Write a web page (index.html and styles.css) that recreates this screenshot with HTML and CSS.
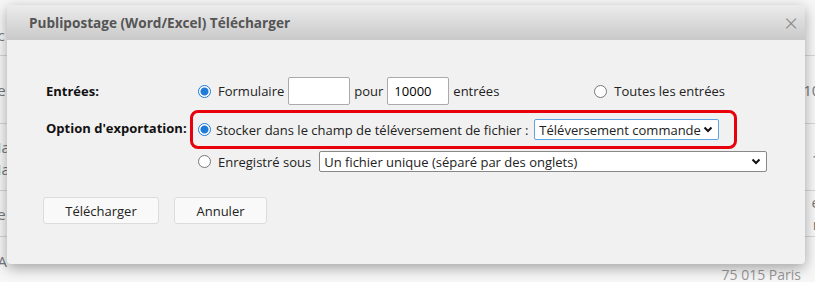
FILE: index.html
```html
<!DOCTYPE html>
<html lang="fr">
<head>
    <meta charset="UTF-8">
    <title>Publipostage</title>
    <link rel="stylesheet" href="styles.css">
</head>
<body>

    <div class="page">
        <div class="row r1"><span class="cell left">Ac</span><span class="cell right"></span></div>
        <div class="row r2"><span class="cell left">de</span><span class="cell right">100</span></div>
        <div class="row r3"><span class="cell left">Ma<br>Ma</span><span class="cell right">10</span></div>
        <div class="row r4"><span class="cell left">de</span><span class="cell right">en<br>ns</span></div>
        <div class="row r5"><span class="cell left">AA</span><span class="cell right">n<br><span class="city">75 015 Paris</span></span></div>
    </div>

    <div class="dialog">
        <div class="dialog-head">
            <span class="title">Publipostage (Word/Excel) Télécharger</span>
            <span class="close">&#215;</span>
        </div>
        <div class="dialog-body">
            <div class="line">
                <label class="key">Entrées:</label>
                <div class="val first">
                    <span class="radio on"></span>
                    <span>Formulaire</span>
                    <input type="text" class="num" value="">
                    <span>pour</span>
                    <input type="text" class="num" value="10000">
                    <span>entrées</span>
                    <span class="radio all"></span>
                    <span>Toutes les entrées</span>
                </div>
            </div>

            <div class="line">
                <label class="key">Option d'exportation:</label>
                <div class="val marked">
                    <span class="radio on"></span>
                    <span>Stocker dans le champ de téléversement de fichier :</span>
                    <div class="select focus">
                        <span>Téléversement commande</span>
                        <svg width="10" height="7" viewBox="0 0 10 7"><path d="M1.5 1.5 L5 5 L8.5 1.5" fill="none" stroke="#111" stroke-width="2"/></svg>
                    </div>
                </div>
            </div>

            <div class="line">
                <label class="key"></label>
                <div class="val first">
                    <span class="radio"></span>
                    <span>Enregistré sous</span>
                    <div class="select wide">
                        <span>Un fichier unique (séparé par des onglets)</span>
                        <svg width="10" height="7" viewBox="0 0 10 7"><path d="M1.5 1.5 L5 5 L8.5 1.5" fill="none" stroke="#111" stroke-width="2"/></svg>
                    </div>
                </div>
            </div>

            <div class="buttons">
                <button class="btn dl">Télécharger</button>
                <button class="btn cancel">Annuler</button>
            </div>
        </div>
    </div>

</body>
</html>
```

FILE: styles.css
```css
body {
    margin: 0;
    font-family: "Open Sans", sans-serif;
    font-size: 13px;
    color: #222;
    background-color: #f7f7f7;
    width: 815px;
    height: 282px;
    overflow: hidden;
    position: relative;
}
.row {
    display: flex;
    justify-content: space-between;
    border-bottom: 1px solid #d6d6d6;
    color: #777;
    font-size: 15px;
    line-height: 22px;
}
.r1 { height: 55px; }
.r2 { height: 67px; }
.r3 { height: 66px; }
.r4 { height: 45px; }
.r5 { height: 46px; border-bottom: none; }
.cell.left {
    margin-left: -12px;
}
.cell.right {
    text-align: right;
    margin-right: -14px;
}
.r1 .left { padding-top: 24px; }
.r2 .left, .r2 .right { padding-top: 23px; }
.r3 .left { padding-top: 12px; }
.r3 .right { padding-top: 24px; }
.r4 .left { padding-top: 12px; }
.r4 .right { padding-top: 0; }
.r5 .left { padding-top: 13px; }
.r5 .right { padding-top: 4px; }
.city {
    display: inline-block;
    margin-right: 28px;
    font-size: 14px;
    color: #999;
}
.dialog {
    position: absolute;
    left: 7px;
    top: 5px;
    width: 798px;
    height: 259px;
    background-color: #f1f1f1;
    border-radius: 4px;
    box-shadow: 0 4px 14px rgba(0, 0, 0, 0.35);
    overflow: hidden;
}
.dialog-head {
    height: 35px;
    background: linear-gradient(#ececec, #c9c9c9);
    display: flex;
    align-items: center;
    justify-content: space-between;
    padding: 0 7px 0 22px;
}
.title {
    font-weight: bold;
    font-size: 13.6px;
    color: #555;
}
.close {
    font-size: 24px;
    color: #888;
    font-weight: 300;
}
.dialog-body {
    padding: 37px 0 0 39px;
}
.line {
    display: flex;
    align-items: center;
    white-space: nowrap;
}
.key {
    width: 144px;
    font-weight: bold;
    color: #111;
}
.val {
    display: flex;
    align-items: center;
    gap: 4px;
}
.val.first {
    padding-left: 8px;
}
.marked {
    border: 3px solid #e8000b;
    border-radius: 8px;
    height: 33px;
    width: 536px;
    padding-left: 5px;
    margin: 5px 0 2px;
}
.marked .radio {
    margin-right: 1px;
}
.radio {
    width: 11px;
    height: 11px;
    border: 1px solid #777;
    border-radius: 50%;
    background-color: #fff;
    margin-right: 3px;
}
.radio.on {
    border-color: #1f7ad8;
    background: radial-gradient(circle, #1f7ad8 0 3.5px, #fff 4.5px);
}
.radio.all {
    margin-left: 91px;
}
.num {
    width: 62px;
    height: 28px;
    box-sizing: border-box;
    border: 1px solid #aaa;
    border-radius: 2px;
    background-color: #fff;
    font-family: "Open Sans", sans-serif;
    font-size: 13px;
    padding: 0 6px;
    margin: 0;
}
.select {
    display: flex;
    align-items: center;
    justify-content: space-between;
    height: 21px;
    box-sizing: border-box;
    background-color: #fff;
    border: 1px solid #888;
    border-radius: 2px;
    padding: 0 5px 0 4px;
    margin-left: 2px;
}
.select.focus {
    border-color: #5ea3e2;
    width: 185px;
}
.select.wide {
    width: 448px;
    margin-left: 4px;
}
.buttons {
    display: flex;
    gap: 15px;
    margin-top: 25px;
    margin-left: -3px;
}
.btn {
    height: 27px;
    background-color: #f9f9f9;
    border: 1px solid #dcdcdc;
    border-radius: 3px;
    font-family: "Open Sans", sans-serif;
    font-size: 13px;
    color: #222;
}
.btn.dl { width: 116px; }
.btn.cancel { width: 93px; }
```
